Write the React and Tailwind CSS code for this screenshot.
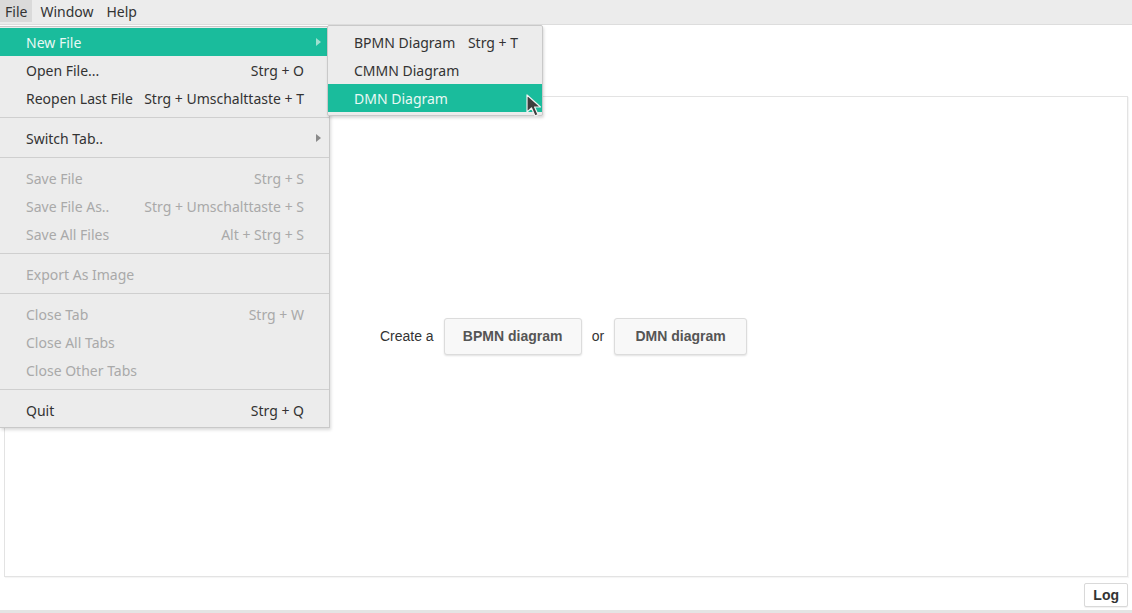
import React from 'react';

const font = { fontFamily: '"Noto Sans", "Open Sans", sans-serif' };

// Menüeintrag im Datei-Menü
const MenuItem = ({ label, shortcut, active, disabled, submenu }) => (
  <div
    className={`flex items-center h-[28px] pl-[26px] pr-[25px] text-[14px] ${
      active ? 'bg-[#1abc9c] text-[#e9f8f4]' : disabled ? 'text-[#a9a9a9]' : 'text-[#333333]'
    } relative`}
  >
    <span className="flex-1 whitespace-nowrap">{label}</span>
    {shortcut && <span className="whitespace-nowrap ml-[8px]">{shortcut}</span>}
    {submenu && (
      <span
        className={`absolute right-[8px] top-[10px] w-0 h-0 border-y-[4px] border-y-transparent border-l-[5px] ${
          active ? 'border-l-[#9fe0d0]' : 'border-l-[#8a8a8a]'
        }`}
      />
    )}
  </div>
);

const Separator = () => <div className="mt-[5px] mb-[6px] h-px bg-[#cfcfcf]" />;

const FileMenu = () => (
  <div
    className="absolute left-0 top-[26px] w-[330px] bg-[#ececec] border border-l-0 border-[#c9c9c9] shadow-[1px_2px_3px_rgba(0,0,0,0.15)] pt-[1px] pb-[3px]"
    style={font}
  >
    <MenuItem label="New File" active submenu />
    <MenuItem label="Open File..." shortcut="Strg + O" />
    <MenuItem label="Reopen Last File" shortcut="Strg + Umschalttaste + T" />
    <Separator />
    <MenuItem label="Switch Tab.." submenu />
    <Separator />
    <MenuItem label="Save File" shortcut="Strg + S" disabled />
    <MenuItem label="Save File As.." shortcut="Strg + Umschalttaste + S" disabled />
    <MenuItem label="Save All Files" shortcut="Alt + Strg + S" disabled />
    <Separator />
    <MenuItem label="Export As Image" disabled />
    <Separator />
    <MenuItem label="Close Tab" shortcut="Strg + W" disabled />
    <MenuItem label="Close All Tabs" disabled />
    <MenuItem label="Close Other Tabs" disabled />
    <Separator />
    <MenuItem label="Quit" shortcut="Strg + Q" />
  </div>
);

const SubMenu = () => (
  <div
    className="absolute left-[327px] top-[25px] w-[216px] bg-[#ececec] border border-[#c9c9c9] rounded-[2px] shadow-[1px_2px_3px_rgba(0,0,0,0.15)] pt-[2px] pb-[3px]"
    style={font}
  >
    <div className="flex items-center h-[28px] pl-[26px] pr-[24px] text-[14px] text-[#333333]">
      <span className="flex-1">BPMN Diagram</span>
      <span>Strg + T</span>
    </div>
    <div className="flex items-center h-[28px] pl-[26px] pr-[24px] text-[14px] text-[#333333]">
      CMMN Diagram
    </div>
    <div className="flex items-center h-[28px] pl-[26px] pr-[24px] text-[14px] bg-[#1abc9c] text-[#e9f8f4]">
      DMN Diagram
    </div>
  </div>
);

const Cursor = () => (
  <svg className="absolute left-[525px] top-[93px]" width="20" height="26" viewBox="0 0 20 26">
    <path
      d="M2 2 L2 19 L6.5 15 L10 23 L13 21.6 L9.6 14 L15.5 14 Z"
      fill="#3d3d3d"
      stroke="#f2f2f2"
      strokeWidth="1.2"
      strokeLinejoin="round"
    />
  </svg>
);

const ghostButton =
  'h-[37px] bg-[#f8f8f8] border border-[#dcdcdc] rounded-[3px] shadow-[0_1px_2px_rgba(0,0,0,0.12)] text-[14px] font-bold text-[#555555]';

export default function App() {
  return (
    <div className="relative w-[1132px] h-[613px] bg-white flex flex-col overflow-hidden">
      {/* Menüleiste */}
      <div
        className="h-[25px] bg-[#ececec] border-b border-[#dddddd] flex items-stretch text-[14px] text-[#333333] pb-[2px]"
        style={font}
      >
        <div className="bg-[#dadada] px-[5px] flex items-center">File</div>
        <div className="pl-[8px] pr-[6px] flex items-center">Window</div>
        <div className="px-[7px] flex items-center">Help</div>
      </div>

      {/* Inhalt */}
      <div
        className="flex-1 flex flex-col px-[4px] pt-[71px]"
        style={{ fontFamily: '"Liberation Sans", Arial, sans-serif' }}
      >
        <div className="h-[481px] border border-[#e3e3e3] shadow-[1px_1px_1px_rgba(0,0,0,0.04)] flex items-center justify-center gap-[10px] pr-[5px]">
          <span className="text-[14px] text-[#333333]">Create a</span>
          <button className={`${ghostButton} w-[138px]`}>BPMN diagram</button>
          <span className="text-[14px] text-[#333333]">or</span>
          <button className={`${ghostButton} w-[133px]`}>DMN diagram</button>
        </div>
        <div className="flex justify-end pt-[6px]">
          <button className="h-[24px] px-[8px] border border-[#d9d9d9] rounded-[2px] bg-white text-[14px] font-bold text-[#333333] shadow-[0_1px_1px_rgba(0,0,0,0.06)]">
            Log
          </button>
        </div>
      </div>
      <div className="h-[3px] bg-[#e4e4e4]" />

      <FileMenu />
      <SubMenu />
      <Cursor />
    </div>
  );
}
